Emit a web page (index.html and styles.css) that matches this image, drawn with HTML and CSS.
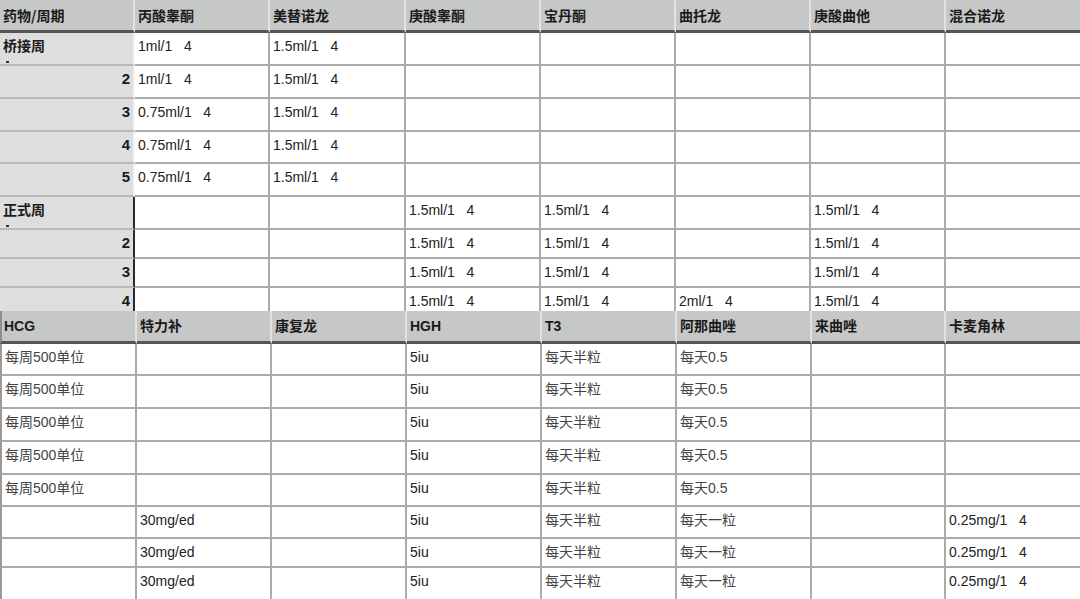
FILE: index.html
```html
<!DOCTYPE html>
<html lang="zh">
<head>
<meta charset="utf-8">
<title>周期表</title>
<link rel="stylesheet" href="styles.css">
</head>
<body>
<table class="sheet top">
  <colgroup>
    <col class="c0"><col class="c1"><col class="c2"><col class="c3"><col class="c4"><col class="c5"><col class="c6"><col class="c7">
  </colgroup>
  <tr class="head">
    <th>药物/周期</th><th>丙酸睾酮</th><th>美替诺龙</th><th>庚酸睾酮</th><th>宝丹酮</th><th>曲托龙</th><th>庚酸曲他</th><th>混合诺龙</th>
  </tr>
  <tr class="r33">
    <td class="lab"><div>桥接周</div><div class="mark"></div></td><td>1ml/1   4</td><td>1.5ml/1   4</td><td></td><td></td><td></td><td></td><td></td>
  </tr>
  <tr class="r33">
    <td class="lab num">2</td><td>1ml/1   4</td><td>1.5ml/1   4</td><td></td><td></td><td></td><td></td><td></td>
  </tr>
  <tr class="r33">
    <td class="lab num">3</td><td>0.75ml/1   4</td><td>1.5ml/1   4</td><td></td><td></td><td></td><td></td><td></td>
  </tr>
  <tr class="r32">
    <td class="lab num">4</td><td>0.75ml/1   4</td><td>1.5ml/1   4</td><td></td><td></td><td></td><td></td><td></td>
  </tr>
  <tr class="r33">
    <td class="lab num">5</td><td>0.75ml/1   4</td><td>1.5ml/1   4</td><td></td><td></td><td></td><td></td><td></td>
  </tr>
  <tr class="r33">
    <td class="lab dark"><div>正式周</div><div class="mark"></div></td><td></td><td></td><td>1.5ml/1   4</td><td>1.5ml/1   4</td><td></td><td>1.5ml/1   4</td><td></td>
  </tr>
  <tr class="r29">
    <td class="lab num dark">2</td><td></td><td></td><td>1.5ml/1   4</td><td>1.5ml/1   4</td><td></td><td>1.5ml/1   4</td><td></td>
  </tr>
  <tr class="r29">
    <td class="lab num dark">3</td><td></td><td></td><td>1.5ml/1   4</td><td>1.5ml/1   4</td><td></td><td>1.5ml/1   4</td><td></td>
  </tr>
  <tr class="r23">
    <td class="lab num dark last">4</td><td></td><td></td><td>1.5ml/1   4</td><td>1.5ml/1   4</td><td>2ml/1   4</td><td>1.5ml/1   4</td><td></td>
  </tr>
</table>
<table class="sheet bottom">
  <colgroup>
    <col class="d0"><col class="d1"><col class="d2"><col class="d3"><col class="d4"><col class="d5"><col class="d6"><col class="d7">
  </colgroup>
  <tr class="head">
    <th>HCG</th><th>特力补</th><th>康复龙</th><th>HGH</th><th>T3</th><th>阿那曲唑</th><th>来曲唑</th><th>卡麦角林</th>
  </tr>
  <tr class="r32"><td class="cn">每周500单位</td><td></td><td></td><td>5iu</td><td class="cn">每天半粒</td><td class="cn">每天0.5</td><td></td><td></td></tr>
  <tr class="r33"><td class="cn">每周500单位</td><td></td><td></td><td>5iu</td><td class="cn">每天半粒</td><td class="cn">每天0.5</td><td></td><td></td></tr>
  <tr class="r33"><td class="cn">每周500单位</td><td></td><td></td><td>5iu</td><td class="cn">每天半粒</td><td class="cn">每天0.5</td><td></td><td></td></tr>
  <tr class="r33"><td class="cn">每周500单位</td><td></td><td></td><td>5iu</td><td class="cn">每天半粒</td><td class="cn">每天0.5</td><td></td><td></td></tr>
  <tr class="r32"><td class="cn">每周500单位</td><td></td><td></td><td>5iu</td><td class="cn">每天半粒</td><td class="cn">每天0.5</td><td></td><td></td></tr>
  <tr class="r32"><td></td><td>30mg/ed</td><td></td><td>5iu</td><td class="cn">每天半粒</td><td class="cn">每天一粒</td><td></td><td>0.25mg/1   4</td></tr>
  <tr class="r29"><td></td><td>30mg/ed</td><td></td><td>5iu</td><td class="cn">每天半粒</td><td class="cn">每天一粒</td><td></td><td>0.25mg/1   4</td></tr>
  <tr class="r31 end"><td></td><td>30mg/ed</td><td></td><td>5iu</td><td class="cn">每天半粒</td><td class="cn">每天一粒</td><td></td><td>0.25mg/1   4</td></tr>
</table>
</body>
</html>
```
FILE: styles.css
```css
html, body {
  margin: 0;
  padding: 0;
  background: #ffffff;
}
body {
  width: 1080px;
  font-family: "Liberation Sans", "Noto Sans CJK SC", sans-serif;
  font-size: 14px;
  color: #222;
}
.sheet {
  width: 1080px;
  table-layout: fixed;
  border-collapse: separate;
  border-spacing: 0;
}
.c0 { width: 135px; }
.c1 { width: 135px; }
.c2 { width: 136px; }
.c3 { width: 135px; }
.c4 { width: 135px; }
.c5 { width: 135px; }
.c6 { width: 135px; }
.c7 { width: 134px; }
.d0 { width: 137px; }
.d1 { width: 135px; }
.d2 { width: 135px; }
.d3 { width: 135px; }
.d4 { width: 135px; }
.d5 { width: 135px; }
.d6 { width: 134px; }
.d7 { width: 134px; }

.sheet th,
.sheet td {
  padding: 0 3px;
  border-right: 2px solid #ababab;
  border-bottom: 2px solid #ababab;
  overflow: hidden;
  white-space: pre;
  line-height: 16px;
  text-align: left;
}
.sheet td {
  vertical-align: top;
  padding-top: 5px;
  background: #fff;
}
.sheet th:last-child,
.sheet td:last-child {
  border-right: 0;
}
.head { height: 33px; }
.head th {
  background: #c6c7c7;
  font-family: "Noto Sans CJK SC", sans-serif;
  font-weight: 700;
  color: #1a1a1a;
  vertical-align: top;
  padding-top: 7px;
  border-right: 2px solid #e2e2e2;
  border-bottom: 3px solid #555;
}
.head th:first-child { padding-left: 3px; }
.bottom .head th { font-family: "Liberation Sans", "Noto Sans CJK SC", sans-serif; }
.bottom .head th:first-child { border-left: 2px solid #8e8e8e; padding-left: 2px; }
.bottom td:first-child { border-left: 2px solid #9a9a9a; padding-left: 3px; }

.r33 { height: 33px; }
.r32 { height: 32px; }
.r31 { height: 31px; }
.r29 { height: 29px; }
.r23 { height: 23px; }

.sheet td.lab {
  background: #dedede;
  font-weight: 700;
  font-family: "Liberation Sans", "Noto Sans CJK SC", sans-serif;
  color: #1a1a1a;
  border-bottom: 2px solid #b9b9b9;
  border-right: 2px solid #f3f3f3;
  padding-left: 3px;
}
.sheet td.num {
  text-align: right;
  padding-right: 3px;
  font-size: 15px;
}
.sheet td.dark { border-right: 2px solid #2a2a2a; }
.sheet td.last { border-bottom: 0; }
.mark {
  width: 3px;
  height: 2px;
  margin: 7px 0 0 3px;
  background: #333;
}
.sheet td.cn {
  color: #444;
}
.end td { border-bottom: 0; }
.top tr.r23 td { border-bottom: 0; }
```
